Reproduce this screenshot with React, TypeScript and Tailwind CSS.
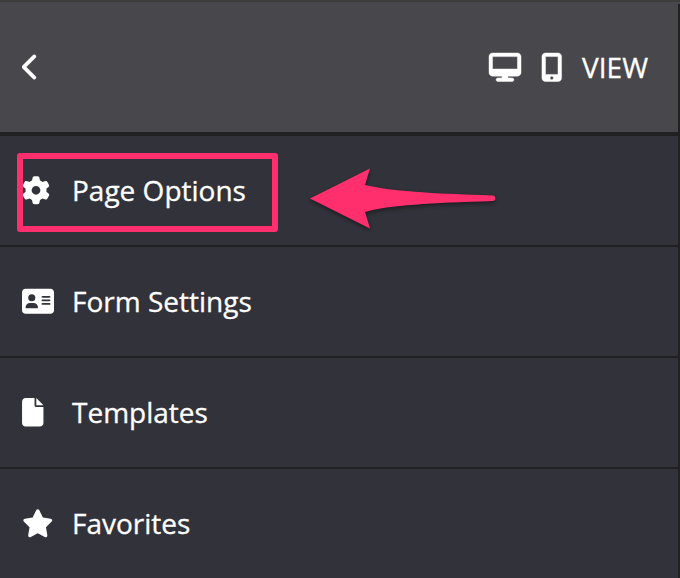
import type { IconType } from "react-icons";
import {
  FaAddressCard,
  FaChevronLeft,
  FaDesktop,
  FaFile,
  FaGear,
  FaMobileScreenButton,
  FaStar,
} from "react-icons/fa6";

type MenuItem = {
  label: string;
  icon: IconType;
  iconClass: string;
};

const menuItems: MenuItem[] = [
  { label: "Page Options", icon: FaGear, iconClass: "w-7" },
  { label: "Form Settings", icon: FaAddressCard, iconClass: "w-8" },
  { label: "Templates", icon: FaFile, iconClass: "w-[21.5px]" },
  { label: "Favorites", icon: FaStar, iconClass: "w-[31.5px]" },
];

function Header() {
  return (
    <header className="flex h-[136px] items-center justify-between border-t-2 border-b-4 border-t-[#3d3d3d] border-b-[#212121] bg-[#47474c] pl-[22px] pr-8">
      <button type="button" aria-label="Back">
        <FaChevronLeft className="h-7 w-[17.5px] stroke-white stroke-[8px]" />
      </button>
      <div className="flex items-center">
        <FaDesktop className="mr-[19.5px] h-[28.5px] w-8 overflow-visible stroke-white stroke-[8px]" />
        <FaMobileScreenButton className="mr-[20px] h-[28.5px] w-[21.5px] overflow-visible stroke-white stroke-[8px]" />
        <span className="text-[28px] leading-9 [-webkit-text-stroke:0.3px_white]">
          VIEW
        </span>
      </div>
    </header>
  );
}

function MenuRow({ item }: { item: MenuItem }) {
  const Icon = item.icon;
  return (
    <li className="flex h-[111px] items-center border-b-2 border-[#212123] pl-[22px]">
      <span className="flex w-[50px] shrink-0">
        <Icon className={`h-[28.5px] ${item.iconClass}`} />
      </span>
      <span className="pb-0.5 text-[28px] leading-9 [-webkit-text-stroke:0.3px_white]">
        {item.label}
      </span>
    </li>
  );
}

// Pink box and arrow drawn over the first row
function Callout() {
  return (
    <>
      <div className="absolute left-[17px] top-[153px] h-[79px] w-[261px] rounded-[3px] border-6 border-[#ff2f6d]" />
      <svg
        className="absolute left-[300px] top-[160px] drop-shadow-[0_2px_2px_rgba(0,0,0,0.45)]"
        width="205"
        height="80"
        viewBox="0 0 205 80"
        aria-hidden="true"
      >
        <path
          d="M10 38.5 70 8.5 65 25C90 31 130 33.5 192.5 35.5A2.7 2.7 0 0 1 192.5 41C130 43 90 45 65 52L70 68.5Z"
          fill="#ff2f6d"
        />
      </svg>
    </>
  );
}

export default function App() {
  return (
    <div className="relative h-[578px] w-[680px] overflow-hidden bg-[#32323a] font-['Open_Sans',sans-serif] text-white">
      <Header />
      <ul>
        {menuItems.map((item) => (
          <MenuRow key={item.label} item={item} />
        ))}
      </ul>
      <div className="absolute right-0 top-1 bottom-0 w-0.5 bg-[#212121]" />
      <Callout />
    </div>
  );
}
